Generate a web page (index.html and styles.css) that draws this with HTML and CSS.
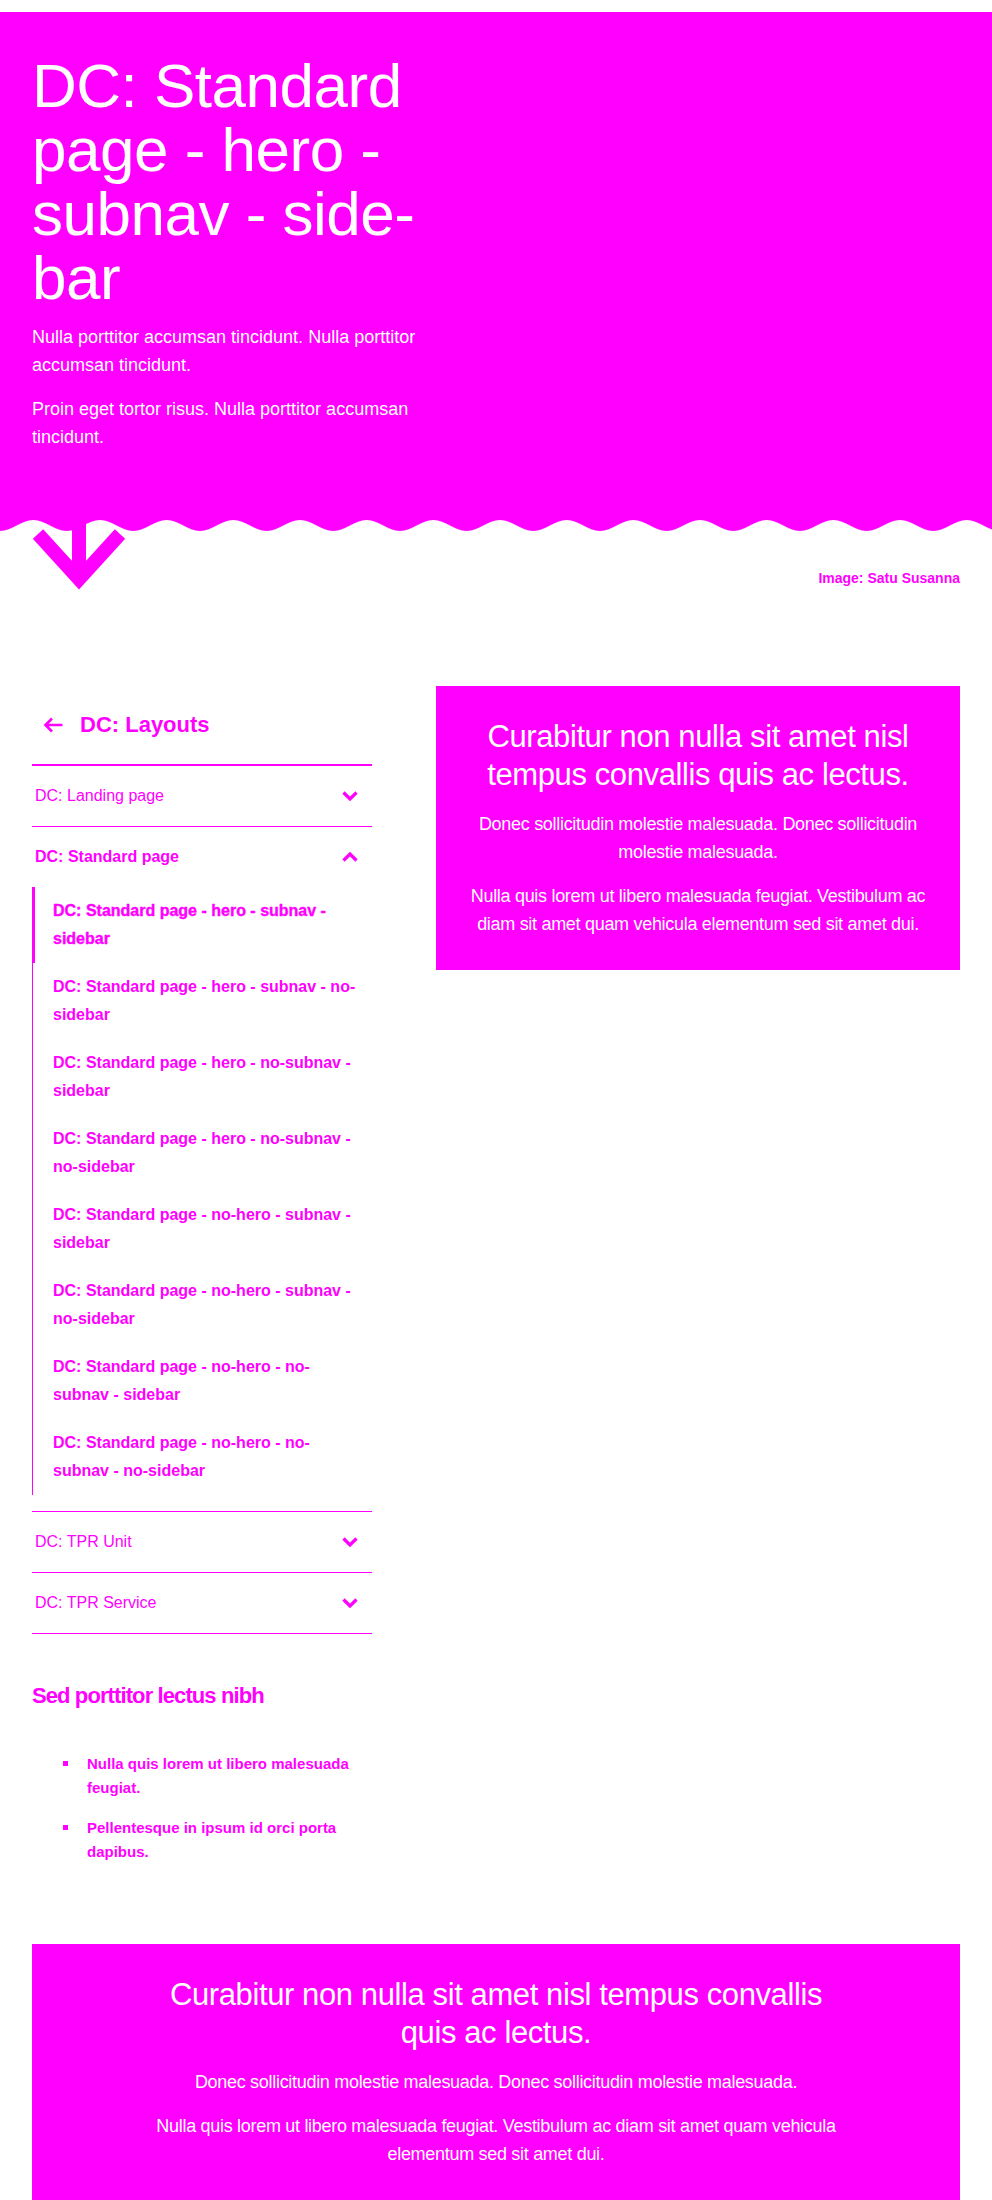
FILE: index.html
```html
<!DOCTYPE html>
<html lang="en">
<head>
<meta charset="utf-8">
<title>DC: Standard page - hero - subnav - sidebar</title>
<link rel="stylesheet" href="styles.css">
</head>
<body>
<header class="hero">
  <div class="hero-inner">
    <div class="hero-text">
      <h1 class="hero-title">DC: Standard page - hero - subnav - side&shy;bar</h1>
      <p>Nulla porttitor accumsan tincidunt. Nulla porttitor accumsan tincidunt.</p>
      <p>Proin eget tortor risus. Nulla porttitor accumsan tincidunt.</p>
    </div>
    <div class="hero-image" aria-hidden="true"></div>
  </div>
</header>
<div class="hero-foot">
  <svg class="hero-wave" viewBox="0 0 992 12" preserveAspectRatio="none" aria-hidden="true">
    <defs>
      <pattern id="wavePattern" patternUnits="userSpaceOnUse" width="66.667" height="12">
        <path d="M0 0H66.667V11C54.667 11 45.333 0 33.333 0C21.333 0 12 11 0 11Z" fill="#ff00ff"/>
      </pattern>
    </defs>
    <rect x="0" y="0" width="992" height="12" fill="url(#wavePattern)"/>
  </svg>
  <svg class="hero-arrow" width="102" height="82" viewBox="0 0 102 82" aria-hidden="true">
    <line x1="51" y1="0" x2="51" y2="69" stroke="#ff00ff" stroke-width="14"/>
    <polyline points="10,24 51,69 92,24" fill="none" stroke="#ff00ff" stroke-width="14" stroke-linejoin="miter" stroke-miterlimit="10"/>
  </svg>
  <p class="caption">Image: Satu Susanna</p>
</div>

<div class="layout">
  <aside class="sidebar">
    <nav class="sidenav">
      <a class="sidenav-back" href="#">
        <svg class="back-icon" width="20" height="16" viewBox="0 0 20 16" aria-hidden="true">
          <path d="M19.5 8H2.5M9 1.5L2.5 8L9 14.5" fill="none" stroke="#ff00ff" stroke-width="2.6"/>
        </svg>
        <span>DC: Layouts</span>
      </a>
      <ul class="nav-list">
        <li class="nav-item">
          <a class="nav-row" href="#">
            <span>DC: Landing page</span>
            <svg class="chev" width="18" height="12" viewBox="0 0 18 12" aria-hidden="true"><polyline points="2.5,2.5 9,9 15.5,2.5" fill="none" stroke="#ff00ff" stroke-width="3.2"/></svg>
          </a>
        </li>
        <li class="nav-item is-open">
          <a class="nav-row nav-row-current" href="#">
            <span>DC: Standard page</span>
            <svg class="chev" width="18" height="12" viewBox="0 0 18 12" aria-hidden="true"><polyline points="2.5,9.5 9,3 15.5,9.5" fill="none" stroke="#ff00ff" stroke-width="3.2"/></svg>
          </a>
          <ul class="subnav">
            <li class="subnav-item is-active"><a href="#">DC: Standard page - hero - subnav - sidebar</a></li>
            <li class="subnav-item"><a href="#">DC: Standard page - hero - subnav - no-sidebar</a></li>
            <li class="subnav-item"><a href="#">DC: Standard page - hero - no-subnav - sidebar</a></li>
            <li class="subnav-item"><a href="#">DC: Standard page - hero - no-subnav - no-sidebar</a></li>
            <li class="subnav-item"><a href="#">DC: Standard page - no-hero - subnav - sidebar</a></li>
            <li class="subnav-item"><a href="#">DC: Standard page - no-hero - subnav - no-sidebar</a></li>
            <li class="subnav-item"><a href="#">DC: Standard page - no-hero - no-subnav - sidebar</a></li>
            <li class="subnav-item"><a href="#">DC: Standard page - no-hero - no-subnav - no-sidebar</a></li>
          </ul>
        </li>
        <li class="nav-item">
          <a class="nav-row" href="#">
            <span>DC: TPR Unit</span>
            <svg class="chev" width="18" height="12" viewBox="0 0 18 12" aria-hidden="true"><polyline points="2.5,2.5 9,9 15.5,2.5" fill="none" stroke="#ff00ff" stroke-width="3.2"/></svg>
          </a>
        </li>
        <li class="nav-item">
          <a class="nav-row" href="#">
            <span>DC: TPR Service</span>
            <svg class="chev" width="18" height="12" viewBox="0 0 18 12" aria-hidden="true"><polyline points="2.5,2.5 9,9 15.5,2.5" fill="none" stroke="#ff00ff" stroke-width="3.2"/></svg>
          </a>
        </li>
      </ul>
    </nav>
    <h2 class="side-title">Sed porttitor lectus nibh</h2>
    <ul class="side-list">
      <li>Nulla quis lorem ut libero malesuada feugiat.</li>
      <li>Pellentesque in ipsum id orci porta dapibus.</li>
    </ul>
  </aside>
  <main class="main">
    <section class="callout">
      <h2 class="callout-title">Curabitur non nulla sit amet nisl tempus convallis quis ac lectus.</h2>
      <p>Donec sollicitudin molestie malesuada. Donec sollicitudin molestie malesuada.</p>
      <p>Nulla quis lorem ut libero malesuada feugiat. Vestibulum ac diam sit amet quam vehicula elementum sed sit amet dui.</p>
    </section>
  </main>
</div>

<section class="banner">
  <div class="banner-inner">
    <h2 class="callout-title">Curabitur non nulla sit amet nisl tempus convallis quis ac lectus.</h2>
    <p>Donec sollicitudin molestie malesuada. Donec sollicitudin molestie malesuada.</p>
    <p>Nulla quis lorem ut libero malesuada feugiat. Vestibulum ac diam sit amet quam vehicula elementum sed sit amet dui.</p>
  </div>
</section>
</body>
</html>
```
FILE: styles.css
```css
* {
  box-sizing: border-box;
}

html,
body {
  margin: 0;
}

body {
  padding-top: 12px;
  background: #ffffff;
  color: #ff00ff;
  font-family: "Liberation Sans", Arial, sans-serif;
}

a {
  color: inherit;
  text-decoration: none;
}

/* Hero */
.hero {
  background: #ff00ff;
  color: #ffffff;
  padding: 42px 32px 69px;
}

.hero-inner {
  display: grid;
  grid-template-columns: 1fr 1fr;
  gap: 64px;
}

.hero-title {
  margin: 0 0 13px;
  font-size: 62px;
  line-height: 64px;
  font-weight: 400;
  letter-spacing: -0.5px;
  hyphens: manual;
}

.hero-text p {
  margin: 0 0 16px;
  font-size: 18px;
  line-height: 28px;
}

.hero-text p:last-child {
  margin-bottom: 0;
}

.hero-foot {
  position: relative;
}

.hero-wave {
  display: block;
  width: 100%;
  height: 12px;
}

.hero-arrow {
  position: absolute;
  left: 28px;
  top: -10px;
  display: block;
}

.caption {
  margin: 0;
  padding: 36px 32px 0;
  text-align: right;
  font-size: 14px;
  line-height: 20px;
  font-weight: 700;
}

/* Layout */
.layout {
  display: grid;
  grid-template-columns: 340px 1fr;
  gap: 64px;
  align-items: start;
  margin-top: 98px;
  padding: 0 32px;
}

/* Side navigation */
.sidenav-back {
  display: flex;
  align-items: center;
  gap: 17px;
  padding: 24px 0 24px 11px;
  border-bottom: 2px solid #ff00ff;
  font-size: 22px;
  line-height: 30px;
  font-weight: 700;
}

.back-icon {
  display: block;
  flex: none;
}

.nav-list {
  list-style: none;
  margin: 0;
  padding: 0;
}

.nav-item {
  border-bottom: 1px solid #ff00ff;
}

.nav-row {
  display: flex;
  align-items: center;
  justify-content: space-between;
  padding: 18px 13px 18px 3px;
  font-size: 16px;
  line-height: 24px;
}

.nav-row-current {
  font-weight: 700;
}

.chev {
  display: block;
  flex: none;
}

.subnav {
  list-style: none;
  margin: 0 0 16px;
  padding: 0;
}

.subnav-item {
  border-left: 1px solid #ff00ff;
}

.subnav-item a {
  display: block;
  padding: 10px 12px 10px 20px;
  font-size: 16px;
  line-height: 28px;
  font-weight: 700;
}

.subnav-item.is-active {
  border-left-width: 3px;
}

.subnav-item.is-active a {
  padding-left: 18px;
  -webkit-text-stroke: 0.4px #ff00ff;
}

/* Sidebar content */
.side-title {
  margin: 48px 0 0;
  font-size: 22px;
  line-height: 28px;
  font-weight: 700;
  letter-spacing: -0.9px;
}

.side-list {
  list-style: none;
  margin: 42px 0 0;
  padding: 0 0 0 31px;
}

.side-list li {
  display: flex;
  gap: 19px;
  margin-bottom: 16px;
  font-size: 15px;
  line-height: 24px;
  font-weight: 700;
}

.side-list li:last-child {
  margin-bottom: 0;
}

.side-list li::before {
  content: "";
  flex: none;
  width: 5px;
  height: 5px;
  margin-top: 9px;
  background: #ff00ff;
}

/* Callouts */
.callout,
.banner {
  background: #ff00ff;
  color: #ffffff;
  text-align: center;
}

.callout {
  padding: 32px 24px;
}

.banner {
  margin: 80px 32px 0;
  padding: 32px 116px;
}

.callout-title {
  margin: 0 0 16px;
  font-size: 31px;
  line-height: 38px;
  font-weight: 400;
  letter-spacing: -0.4px;
}

.callout p,
.banner p {
  margin: 0 0 16px;
  font-size: 18px;
  line-height: 28px;
  letter-spacing: -0.3px;
}

.callout p:last-child,
.banner p:last-child {
  margin-bottom: 0;
}
```
